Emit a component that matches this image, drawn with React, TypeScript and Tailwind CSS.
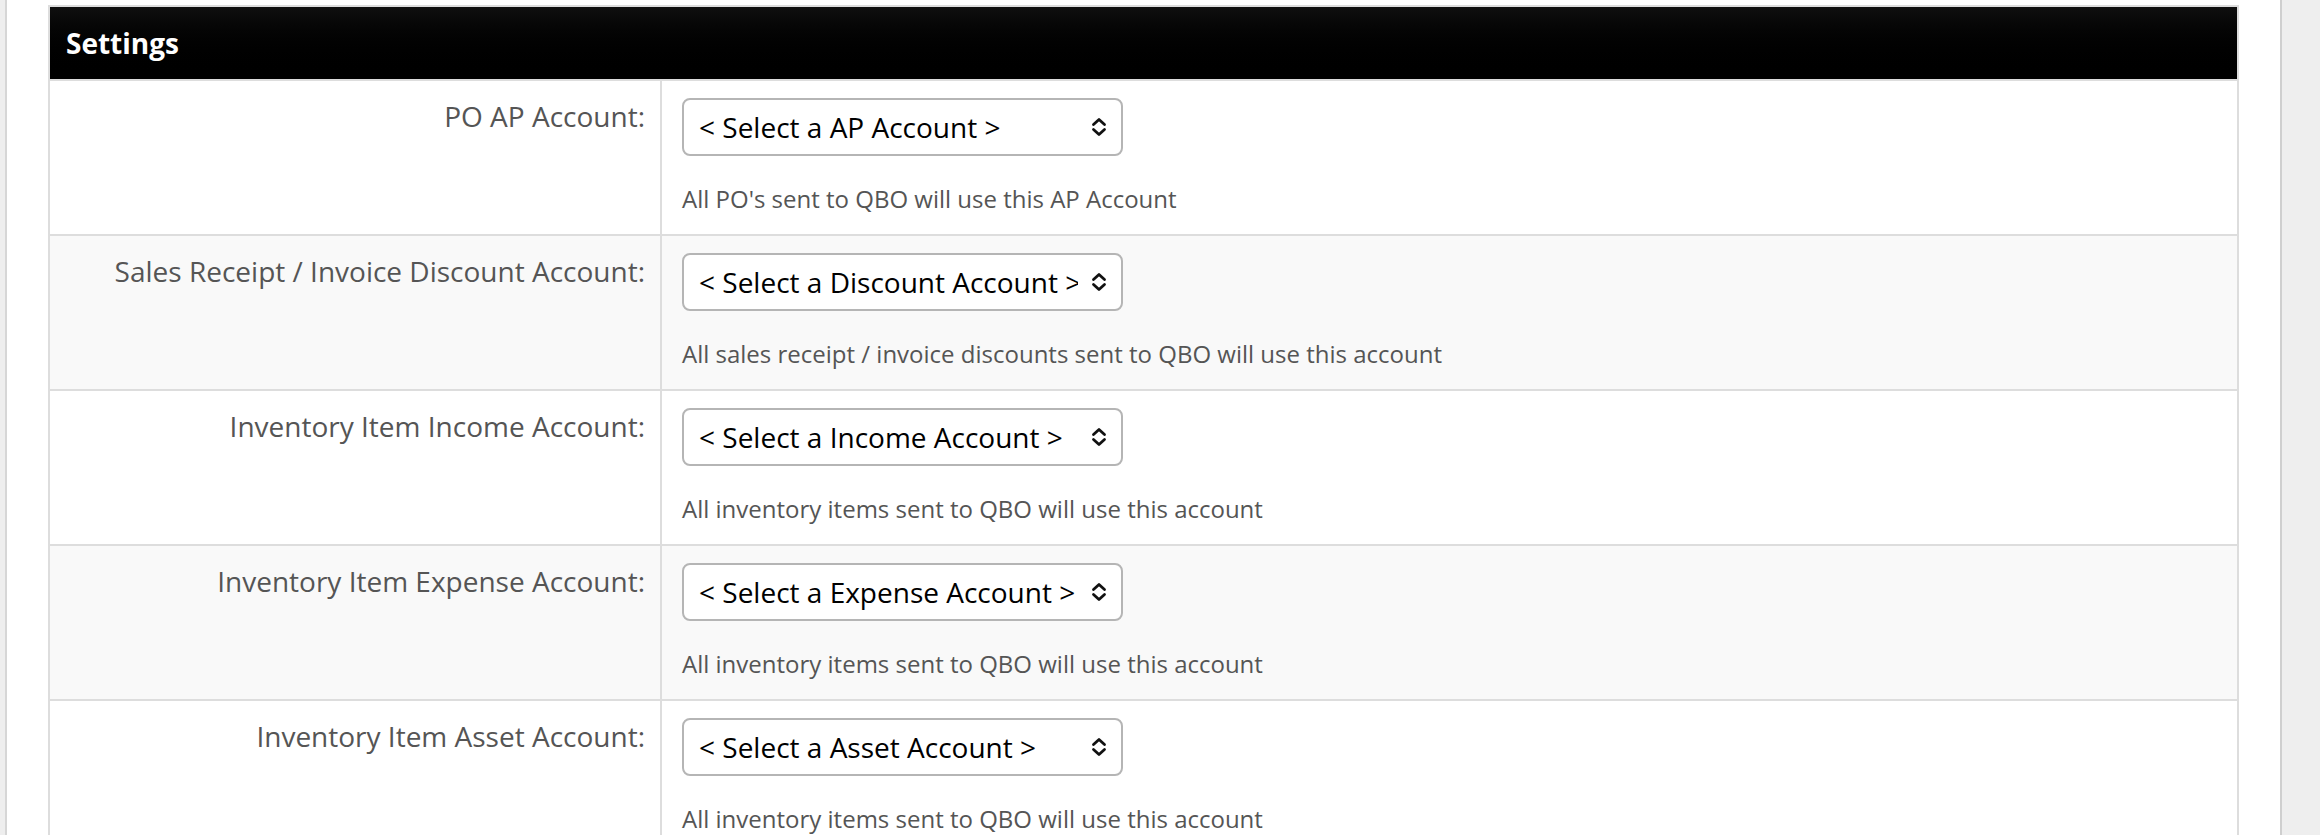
import React from 'react'

interface SettingRow {
  label: string
  placeholder: string
  help: string
}

const ROWS: SettingRow[] = [
  {
    label: 'PO AP Account:',
    placeholder: '< Select a AP Account >',
    help: "All PO's sent to QBO will use this AP Account",
  },
  {
    label: 'Sales Receipt / Invoice Discount Account:',
    placeholder: '< Select a Discount Account >',
    help: 'All sales receipt / invoice discounts sent to QBO will use this account',
  },
  {
    label: 'Inventory Item Income Account:',
    placeholder: '< Select a Income Account >',
    help: 'All inventory items sent to QBO will use this account',
  },
  {
    label: 'Inventory Item Expense Account:',
    placeholder: '< Select a Expense Account >',
    help: 'All inventory items sent to QBO will use this account',
  },
  {
    label: 'Inventory Item Asset Account:',
    placeholder: '< Select a Asset Account >',
    help: 'All inventory items sent to QBO will use this account',
  },
]

function UpDownChevron() {
  return (
    <svg width="16" height="20" viewBox="0 0 16 20" fill="none" className="shrink-0">
      <path d="M2.5 7.5 L8 2.5 L13.5 7.5" stroke="#111" strokeWidth="2.8" strokeLinecap="round" strokeLinejoin="round" />
      <path d="M2.5 12.5 L8 17.5 L13.5 12.5" stroke="#111" strokeWidth="2.8" strokeLinecap="round" strokeLinejoin="round" />
    </svg>
  )
}

function AccountSelect({ placeholder }: { placeholder: string }) {
  return (
    <div className="flex h-[58px] w-[441px] items-center rounded-[8px] border-2 border-[#b5b5b5] bg-white pl-[15px] pr-[14px]">
      <span className="w-[379px] overflow-hidden whitespace-nowrap text-[28px] leading-[36px] text-black">{placeholder}</span>
      <div className="flex flex-1 justify-end">
        <UpDownChevron />
      </div>
    </div>
  )
}

export default function App() {
  return (
    <div
      className="flex h-[835px] w-[2320px] overflow-hidden bg-white"
      style={{ fontFamily: '"Open Sans", "Noto Sans", sans-serif' }}
    >
      {/* left gutter */}
      <div className="w-[7px] shrink-0 border-r-2 border-[#d6d6d6] bg-[#eeeeee]" />

      {/* content */}
      <div className="w-[2273px] shrink-0 pl-[41px] pt-[5px]">
        <div className="w-[2191px] border-2 border-[#dddddd]">
          {/* header */}
          <div className="flex h-[72px] items-center bg-linear-to-b from-[#0f0f0f] to-black pl-[16px]">
            <span className="text-[28px] font-bold text-white">Settings</span>
          </div>

          {ROWS.map((row, i) => (
            <div
              key={row.label}
              className={`grid grid-cols-[612px_1fr] border-t-2 border-[#dddddd] ${i % 2 === 1 ? 'bg-[#f9f9f9]' : 'bg-white'}`}
            >
              <div className="border-r-2 border-[#dddddd] pr-[15px] pt-[17px] text-right">
                <span className="text-[28px] leading-[36px] text-[#555555]">{row.label}</span>
              </div>
              <div className="pb-[20px] pl-[20px] pt-[17px]">
                <AccountSelect placeholder={row.placeholder} />
                <p className="mt-[28px] text-[24px] leading-[30px] text-[#555555]">{row.help}</p>
              </div>
            </div>
          ))}
        </div>
      </div>

      {/* right scrollbar gutter */}
      <div className="flex-1 border-l-2 border-[#cfcfcf] bg-[#eeeeee]" />
    </div>
  )
}
